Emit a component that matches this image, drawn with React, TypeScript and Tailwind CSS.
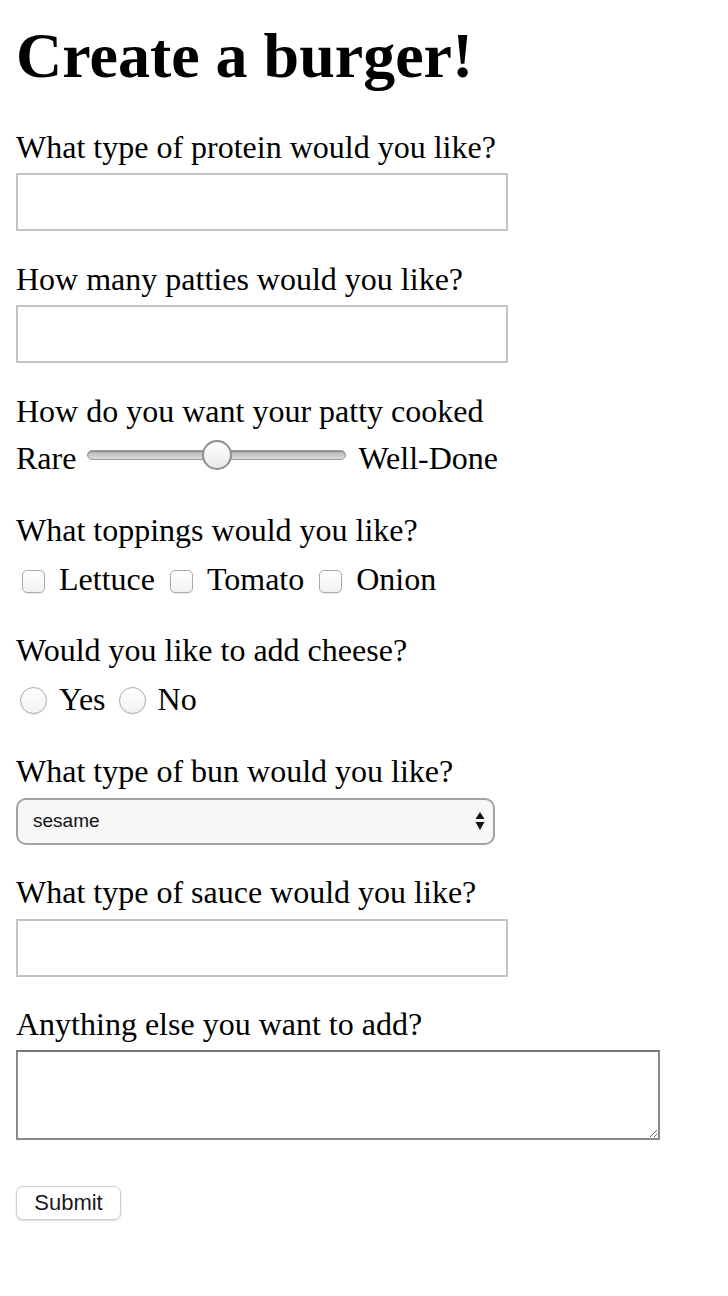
import { useState } from 'react';

const serif = 'font-["Liberation_Serif",serif]';
const sans = 'font-["Liberation_Sans",Arial,sans-serif]';

// Native-looking up/down arrows of the bun select
function SelectArrows() {
  return (
    <svg width="10" height="18" viewBox="0 0 10 18" className="pointer-events-none absolute right-[10px] top-[14px]">
      <path d="M5 0 L9.5 7 L0.5 7 Z" fill="#111" />
      <path d="M5 18 L9.5 10 L0.5 10 Z" fill="#111" />
    </svg>
  );
}

function Label({ children, className = '' }: { children: React.ReactNode; className?: string }) {
  return <label className={`block text-[32px] leading-[36px] text-black ${className}`}>{children}</label>;
}

function TextBox({ className = '' }: { className?: string }) {
  return (
    <input
      type="text"
      className={`block w-[492px] h-[58px] border-2 border-[#c4c4c4] bg-white px-2 text-[26px] outline-none ${className}`}
    />
  );
}

export default function App() {
  const [doneness] = useState(50);
  const [toppings, setToppings] = useState<string[]>([]);
  const [cheese, setCheese] = useState('');

  const toggleTopping = (t: string) => {
    setToppings((prev) => (prev.includes(t) ? prev.filter((x) => x !== t) : [...prev, t]));
  };

  return (
    <form className={`${serif} flex flex-col items-start px-4 pt-5 pb-10 bg-white min-h-[1296px]`} onSubmit={(e) => e.preventDefault()}>
      <h1 className="text-[64px] leading-[72px] font-bold">Create a burger!</h1>

      <Label className="mt-[37px]">What type of protein would you like?</Label>
      <TextBox className="mt-[8px]" />

      <Label className="mt-[30px]">How many patties would you like?</Label>
      <TextBox className="mt-[8px]" />

      <Label className="mt-[30px]">How do you want your patty cooked</Label>
      {/* Doneness slider */}
      <div className="mt-[11px] flex items-start h-[36px] text-[32px] leading-[36px]">
        <span>Rare</span>
        <div role="slider" aria-valuenow={doneness} className="relative ml-[11px] mr-[12px] w-[259px] h-[30px]">
          <div className="absolute left-0 right-0 top-[10px] h-[10px] rounded-full border border-[#9a9a9a] bg-gradient-to-b from-[#b4b4b4] to-[#dcdcdc] shadow-[inset_0_1px_1px_rgba(0,0,0,0.25)]" />
          <div
            className="absolute top-0 w-[30px] h-[30px] rounded-full border-2 border-[#8f8f8f] bg-gradient-to-b from-white to-[#e9e9e9]"
            style={{ left: `calc(${doneness}% - 15px)` }}
          />
        </div>
        <span>Well-Done</span>
      </div>

      <Label className="mt-[36px]">What toppings would you like?</Label>
      <div className="mt-[13px] flex items-start h-[36px] text-[32px] leading-[36px]">
        {['Lettuce', 'Tomato', 'Onion'].map((t) => (
          <label key={t} className="flex items-start">
            <input
              type="checkbox"
              checked={toppings.includes(t)}
              onChange={() => toggleTopping(t)}
              className="appearance-none ml-[6px] mr-[14px] mt-[9px] w-[23px] h-[23px] rounded-[5px] border border-[#a9a9a9] bg-gradient-to-b from-white to-[#f1f1f1] shadow-[0_1px_1px_rgba(0,0,0,0.08)] checked:bg-[#3b82f6]"
            />
            <span className="mr-[9px]">{t}</span>
          </label>
        ))}
      </div>

      <Label className="mt-[35px]">Would you like to add cheese?</Label>
      <div className="mt-[13px] flex items-start h-[36px] text-[32px] leading-[36px]">
        {['Yes', 'No'].map((c) => (
          <label key={c} className="flex items-start">
            <input
              type="radio"
              name="cheese"
              checked={cheese === c}
              onChange={() => setCheese(c)}
              className="appearance-none ml-[4px] mr-[12px] mt-[6px] w-[27px] h-[27px] rounded-full border border-[#a9a9a9] bg-gradient-to-b from-white to-[#f2f2f2] shadow-[0_1px_1px_rgba(0,0,0,0.08)] checked:border-[8px] checked:border-[#3b82f6]"
            />
            <span className="mr-[9px]">{c}</span>
          </label>
        ))}
      </div>

      <Label className="mt-[36px]">What type of bun would you like?</Label>
      <div className="relative mt-[9px] w-[479px] h-[47px]">
        <select
          defaultValue="sesame"
          className={`${sans} appearance-none block w-full h-full rounded-[10px] border-2 border-[#a2a2a2] bg-[#f7f7f7] pl-[15px] text-[19px] text-[#111] outline-none`}
        >
          <option value="sesame">sesame</option>
          <option value="brioche">brioche</option>
          <option value="pretzel">pretzel</option>
          <option value="wheat">wheat</option>
        </select>
        <SelectArrows />
      </div>

      <Label className="mt-[29px]">What type of sauce would you like?</Label>
      <TextBox className="mt-[9px]" />

      <Label className="mt-[29px]">Anything else you want to add?</Label>
      <textarea className="block mt-[8px] w-[644px] h-[90px] border-2 border-[#8a8a8a] border-t-[#777] bg-white outline-none" />

      <button
        type="submit"
        className={`${sans} mt-[46px] w-[105px] h-[34px] rounded-[7px] border border-[#cfcfcf] bg-white text-[22px] leading-none text-[#1a1a1a] shadow-[0_1px_2px_rgba(0,0,0,0.15)]`}
      >
        Submit
      </button>
    </form>
  );
}
